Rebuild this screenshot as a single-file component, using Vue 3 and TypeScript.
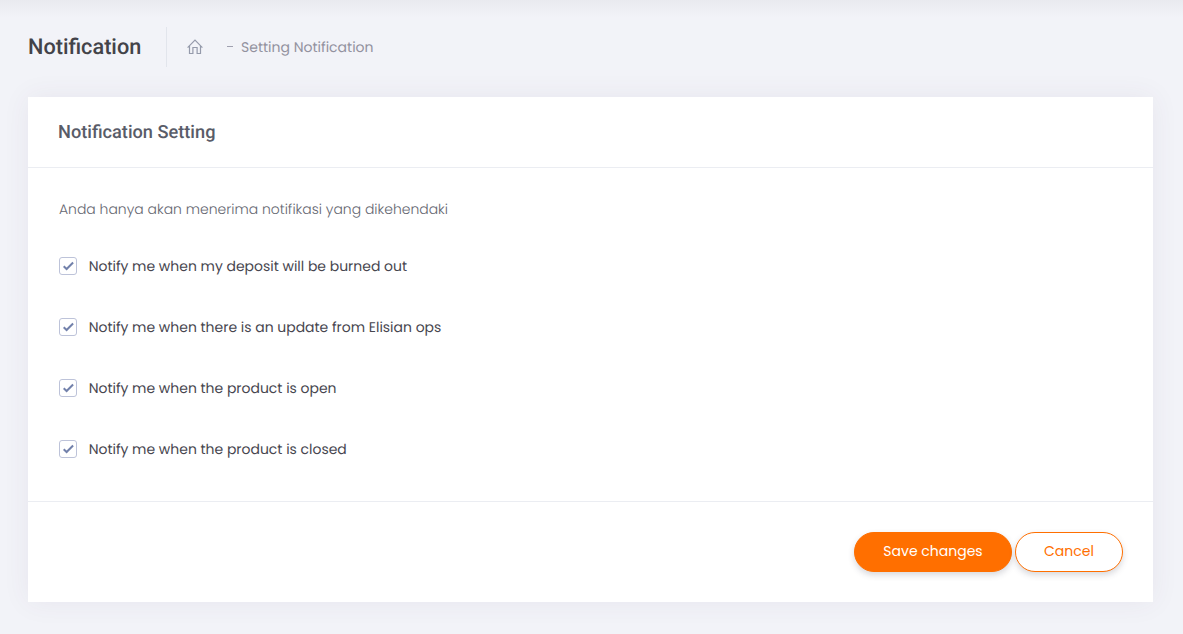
<script setup lang="ts">
import { ref } from 'vue'

interface Option {
  id: string
  label: string
  checked: boolean
}

const options = ref<Option[]>([
  { id: 'deposit', label: 'Notify me when my deposit will be burned out', checked: true },
  { id: 'update', label: 'Notify me when there is an update from Elisian ops', checked: true },
  { id: 'open', label: 'Notify me when the product is open', checked: true },
  { id: 'closed', label: 'Notify me when the product is closed', checked: true },
])
</script>

<template>
  <div class="page">
    <header class="subheader">
      <h1 class="title">Notification</h1>
      <span class="divider"></span>
      <svg class="home" viewBox="0 0 16 16" width="16" height="16">
        <path d="M.6 8.6 8 1.2l7.4 7.4M2.5 7v7.5h3.4V8.5h4.2v6h3.4V7" />
      </svg>
      <span class="dash"></span>
      <span class="crumb">Setting Notification</span>
    </header>

    <main class="card">
      <div class="card-head">
        <h2 class="card-title">Notification Setting</h2>
      </div>
      <div class="card-body">
        <p class="intro">Anda hanya akan menerima notifikasi yang dikehendaki</p>
        <label v-for="option in options" :key="option.id" class="option">
          <input v-model="option.checked" type="checkbox" class="native" />
          <span class="box">
            <svg v-if="option.checked" viewBox="0 0 16 16" width="16" height="16">
              <path d="M3.7 8.2 6.6 11 13.1 4.5" />
            </svg>
          </span>
          <span class="label">{{ option.label }}</span>
        </label>
      </div>
      <div class="card-foot">
        <button type="button" class="btn save">Save changes</button>
        <button type="button" class="btn cancel">Cancel</button>
      </div>
    </main>
  </div>
</template>

<style>
body {
  margin: 0;
  background: #f2f3f8;
}
</style>

<style scoped>
.page {
  box-sizing: border-box;
  height: 634px;
  padding: 27px 30px 32px 28px;
  overflow: hidden;
  background: linear-gradient(#e9eaef 0, #eeeff4 9px, #f2f3f8 18px);
  font-family: Poppins, Inter, sans-serif;
  font-size: 13.96px;
  text-rendering: geometricPrecision;
}
.subheader {
  display: flex;
  align-items: center;
  height: 40px;
}
.title {
  width: 138px;
  margin: 0;
  font: 500 21.7px/39px Roboto, sans-serif;
  color: #434349;
  white-space: nowrap;
}
.divider {
  width: 1px;
  height: 40px;
  background: #e2e5ec;
}
.home {
  margin-left: 20px;
  fill: none;
  stroke: #959aab;
  stroke-width: 1.2;
}
.dash {
  width: 6px;
  height: 1px;
  margin: -1px 8px 0 24px;
  background: #a0a0b0;
}
.crumb {
  font-size: 14px;
  color: #93929f;
  white-space: nowrap;
}
.card {
  height: 505px;
  margin-top: 30px;
  background: #fff;
  box-shadow: 0 0 26px rgba(82, 63, 105, 0.07);
}
.card-head {
  height: 70px;
  border-bottom: 1px solid #ebedf2;
}
.card-title {
  height: 70px;
  margin: 0;
  padding-left: 30px;
  font: 500 18.2px/72px Roboto, sans-serif;
  color: #595c68;
}
.card-body {
  box-sizing: border-box;
  height: 333px;
  padding: 30px 31px 0;
}
.intro {
  margin: 0 0 26px;
  line-height: 22px;
  font-weight: 300;
  color: #646670;
}
.option {
  display: flex;
  align-items: center;
  height: 40px;
  margin-bottom: 21px;
  color: #47464f;
}
.native {
  position: absolute;
  opacity: 0;
}
.box {
  box-sizing: border-box;
  display: grid;
  width: 18px;
  height: 18px;
  margin-right: 11.7px;
  border: 1px solid #bdc3d9;
  border-radius: 3px;
}
.box path {
  fill: none;
  stroke: #7281ab;
  stroke-width: 2;
}
.label {
  white-space: nowrap;
}
.card-foot {
  display: flex;
  justify-content: flex-end;
  gap: 3px;
  padding: 30px 30px 0;
  border-top: 1px solid #ebedf2;
}
.btn {
  box-sizing: border-box;
  height: 40px;
  padding: 0 0 2px;
  border: 1px solid #ff6f00;
  border-radius: 20px;
  font-family: inherit;
  font-size: 14px;
  box-shadow: 0 3px 6px rgba(60, 60, 80, 0.2);
}
.save {
  width: 158px;
  background: #ff6f00;
  color: #fff;
}
.cancel {
  width: 108px;
  background: #fff;
  color: #ff6f00;
}
</style>
